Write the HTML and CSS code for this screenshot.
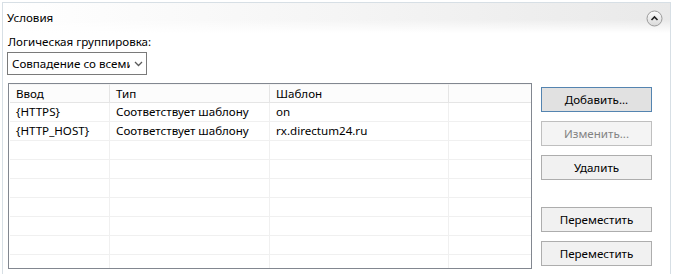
FILE: index.html
```html
<!DOCTYPE html>
<html lang="ru">
<head>
<meta charset="utf-8">
<link rel="stylesheet" href="styles.css">
</head>
<body>
<div class="panel">
  <div class="header">
    <span class="title">Условия</span>
    <span class="collapse">
      <svg width="17" height="17" viewBox="0 0 17 17">
        <defs>
          <linearGradient id="g" x1="0" y1="0" x2="0" y2="1">
            <stop offset="0" stop-color="#fdfdfd"/>
            <stop offset="1" stop-color="#d9d9d9"/>
          </linearGradient>
        </defs>
        <circle cx="8.5" cy="8.5" r="7.5" fill="url(#g)" stroke="#9c9c9c"/>
        <path d="M5.5 10 L8.5 7 L11.5 10" fill="none" stroke="#222" stroke-width="1.6"/>
      </svg>
    </span>
  </div>
  <div class="body">
    <div class="label">Логическая группировка:</div>
    <div class="select">
      <span class="select-text">Совпадение со всеми</span>
      <svg class="chev" width="9" height="6" viewBox="0 0 9 6"><path d="M1 1 L4.5 4.5 L8 1" fill="none" stroke="#5a5a5a" stroke-width="1.3"/></svg>
    </div>
    <div class="main">
      <div class="grid">
        <div class="row head">
          <div class="cell">Ввод</div><div class="cell">Тип</div><div class="cell">Шаблон</div><div class="cell"></div>
        </div>
        <div class="row">
          <div class="cell">{HTTPS}</div><div class="cell">Соответствует шаблону</div><div class="cell">on</div><div class="cell"></div>
        </div>
        <div class="row">
          <div class="cell">{HTTP_HOST}</div><div class="cell">Соответствует шаблону</div><div class="cell">rx.directum24.ru</div><div class="cell"></div>
        </div>
        <div class="row"><div class="cell"></div><div class="cell"></div><div class="cell"></div><div class="cell"></div></div>
        <div class="row"><div class="cell"></div><div class="cell"></div><div class="cell"></div><div class="cell"></div></div>
        <div class="row"><div class="cell"></div><div class="cell"></div><div class="cell"></div><div class="cell"></div></div>
        <div class="row"><div class="cell"></div><div class="cell"></div><div class="cell"></div><div class="cell"></div></div>
        <div class="row"><div class="cell"></div><div class="cell"></div><div class="cell"></div><div class="cell"></div></div>
        <div class="row"><div class="cell"></div><div class="cell"></div><div class="cell"></div><div class="cell"></div></div>
        <div class="row"><div class="cell"></div><div class="cell"></div><div class="cell"></div><div class="cell"></div></div>
      </div>
      <div class="buttons">
        <button class="btn default">Добавить...</button>
        <button class="btn disabled">Изменить...</button>
        <button class="btn">Удалить</button>
        <button class="btn move">Переместить</button>
        <button class="btn">Переместить</button>
      </div>
    </div>
  </div>
</div>
</body>
</html>
```
FILE: styles.css
```css
* { box-sizing: border-box; }
html, body {
  margin: 0;
  padding: 0;
  background: #fff;
  width: 673px;
  height: 274px;
  overflow: hidden;
  font-family: "Noto Sans", "Open Sans", sans-serif;
  font-size: 11.6px;
  color: #000;
}
.panel {
  margin: 2px 2px 0 2px;
  height: 272px;
  border: 1px solid #d7dfe5;
  border-bottom: none;
}
.header {
  height: 30px;
  display: flex;
  align-items: center;
  justify-content: space-between;
  padding: 0 7px 0 4px;
  background:
    linear-gradient(to bottom, rgba(255,255,255,0) 0%, rgba(255,255,255,0) 55%, #fff 100%),
    linear-gradient(to right, #fff 0%, #f5f5f5 50%, #e9e9e9 100%);
}
.title { line-height: 16px; }
.collapse { display: flex; }
.body { padding: 1px 0 0 4px; }
.label { line-height: 16px; padding-left: 1px; }
.select {
  margin-top: 2px;
  width: 140px;
  height: 23px;
  border: 1px solid #7a7a7a;
  display: flex;
  align-items: center;
  padding-left: 4px;
  overflow: hidden;
}
.select-text {
  width: 118px;
  overflow: hidden;
  white-space: nowrap;
  flex: none;
}
.chev { margin-left: 4px; flex: none; }
.main {
  display: flex;
  margin-top: 8px;
  padding-left: 1px;
}
.grid {
  width: 524px;
  height: 186px;
  border: 1px solid #828790;
  padding: 0 0 0 1px;
  overflow: hidden;
}
.row {
  display: grid;
  grid-template-columns: 100px 160px 179px 1fr;
  height: 19px;
}
.cell {
  border-right: 1px solid #f0f0f0;
  border-bottom: 1px solid #f0f0f0;
  padding-left: 6px;
  line-height: 18px;
  white-space: nowrap;
  overflow: hidden;
}
.head .cell {
  background: #fcfcfc;
  border-right: 1px solid #e5e5e5;
  border-bottom: 1px solid #e5e5e5;
  border-top: 1px solid #f4f4f4;
  line-height: 17px;
}
.head .cell:last-child { border-right: none; }
.row .cell:last-child { border-right: none; }
.buttons {
  display: flex;
  flex-direction: column;
  gap: 9px;
  margin-left: 9px;
  padding-top: 4px;
}
.btn {
  width: 111px;
  height: 25px;
  border: 1px solid #adadad;
  background: #f1f1f1;
  font-family: inherit;
  font-size: 11.6px;
  color: #000;
  padding: 0;
}
.btn.default {
  background: #e1e1e1;
  border-color: #5484b0;
}
.btn.disabled { color: #838383; background: #f4f4f4; border-color: #bfbfbf; }
.btn.move { margin-top: 18px; }
```
